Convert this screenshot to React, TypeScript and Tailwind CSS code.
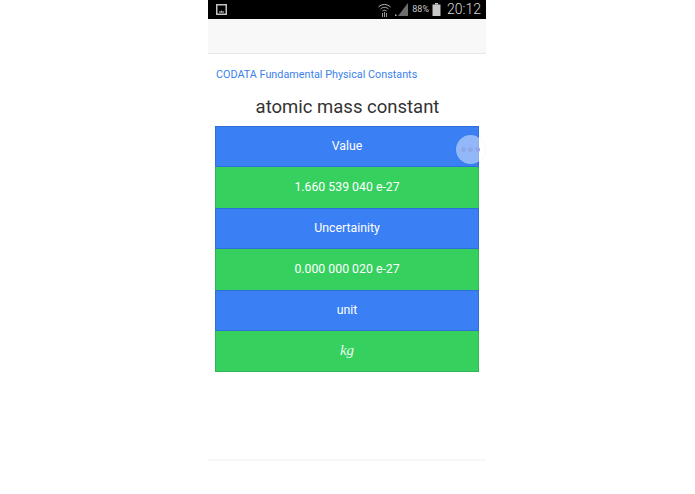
export default function App() {
  const rows: [string, boolean][] = [
    ["Value", true],
    ["1.660 539 040 e-27", false],
    ["Uncertainity", true],
    ["0.000 000 020 e-27", false],
    ["unit", true],
  ];
  return (
    <div className="h-[494px] w-[695px] bg-white flex justify-center font-['Roboto',sans-serif]">
      <div className="relative w-[278px] ml-[-1px] h-[494px] flex flex-col">
        <div className="h-[19px] bg-black flex items-center pl-[8px] pr-[5px]">
          <svg width="11" height="11" viewBox="0 0 11 11" fill="none">
            <rect x="0.75" y="0.75" width="9.5" height="9.5" stroke="#c4c4c4" strokeWidth="1.5" />
            <path d="M3 7.5H5L6 6.2V7.5H8V8.5H3Z" fill="#d8d8d8" />
          </svg>
          <div className="flex-1" />
          <svg width="13" height="14" viewBox="0 0 13 14" fill="none" stroke="#c0c0c0" strokeWidth="1" className="mr-[4px]">
            <path d="M0.5 4C4 0.7 9 0.7 12.5 4" />
            <path d="M2.5 6C5 3.8 8 3.8 10.5 6" />
            <path d="M4.5 8C5.7 7 7.3 7 8.5 8" />
            <path d="M6.5 9V14M4.5 10V14M8.5 10V14" strokeWidth="0.8" />
          </svg>
          <svg width="13" height="13" viewBox="0 0 13 13" className="mr-[4px]">
            <path d="M13 0V13H3Z" fill="#6e6e6e" />
            <rect x="0" y="11.5" width="1.5" height="1.5" fill="#bbbbbb" />
          </svg>
          <span className="text-[9px] leading-[19px] text-[#c4c4c4] mr-[3px]">88%</span>
          <svg width="9" height="13" viewBox="0 0 9 13" className="mr-[6px]">
            <rect x="3" y="0" width="3" height="1.5" fill="#c8c8c8" />
            <rect x="0.5" y="1.5" width="8" height="11.5" fill="#c8c8c8" />
          </svg>
          <span className="text-[14px] leading-[19px] font-light text-[#d8d8d8]">20:12</span>
        </div>
        <div className="h-[35px] bg-[#f8f8f8] border-b border-[#e7e7e7]" />
        <div className="pl-[8px] pt-[13px] text-[10.8px] leading-[16px] text-[#3a82ea]">
          CODATA Fundamental Physical Constants
        </div>
        <div className="text-center text-[18.5px] leading-[24px] text-[#333333] mt-[12px] ml-[1px]">
          atomic mass constant
        </div>
        <div className="mt-[7px] ml-[7px] w-[264px] flex flex-col">
          {rows.map(([t, blue]) => (
            <div
              key={t}
              className={
                blue
                  ? "h-[41px] flex items-center justify-center text-[12.3px] text-white bg-[#3b7ff5] border border-[#2f6fd8]"
                  : "h-[41px] flex items-center justify-center text-[12.3px] text-white bg-[#36d05f] border-x border-[#2fb554]"
              }
            >
              {t}
            </div>
          ))}
          <div className="h-[41px] flex items-center justify-center text-[15px] italic text-[#e8fbee] bg-[#36d05f] border-x border-b border-[#2fb554] font-['Liberation_Serif',serif] pb-[2px]">
            kg
          </div>
        </div>
        <div className="absolute left-[248px] top-[135px] w-[29px] h-[29px] rounded-full bg-white/45 flex items-center justify-center gap-[2px] shadow-[0_0_2px_rgba(0,0,0,0.08)]">
          <span className="w-[5px] h-[5px] rounded-full bg-[#8fa8ea]" />
          <span className="w-[5px] h-[5px] rounded-full bg-[#8fa8ea]" />
          <span className="w-[5px] h-[5px] rounded-full bg-[#8fa8ea]" />
        </div>
        <div className="absolute left-0 right-0 top-[459px] h-[2px] bg-[#f8f8f8]" />
      </div>
    </div>
  );
}
